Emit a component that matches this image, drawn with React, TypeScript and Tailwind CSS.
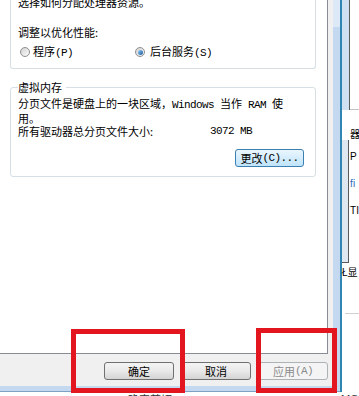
import React from "react";

const cjk = "font-['Noto_Sans_CJK_SC',sans-serif]";

// Latin parts render as narrow monospace, like SimSun does
function M({ children }: { children: React.ReactNode }) {
  return (
    <span className="font-['Liberation_Mono',monospace] tracking-[-0.6px]">
      {children}
    </span>
  );
}

function Radio({ checked = false }: { checked?: boolean }) {
  return (
    <span className="flex h-[10px] w-[10px] shrink-0 items-center justify-center rounded-full border border-[#8e8f8f] bg-linear-to-br from-[#d2d2d2] to-[#fbfbfb]">
      {checked && (
        <span className="h-[5px] w-[5px] rounded-full bg-linear-to-br from-[#8fcdf7] to-[#1a5a9e]" />
      )}
    </span>
  );
}

export default function App() {
  return (
    <div
      className={`relative flex h-[396px] w-[359px] flex-col overflow-hidden bg-white text-[11px] leading-[14px] text-black ${cjk}`}
    >
      <div className="flex h-[392px]">
        {/* performance options dialog */}
        <div className="flex w-[340px] flex-col">
          <div className="flex h-[386px]">
            <div className="flex w-[333px] flex-col bg-[#f0f0f0]">
              {/* tab page */}
              <div className="flex h-[354px] w-[328px] flex-col border-r border-b border-[#898c95] bg-white pl-[10px]">
                <div className="flex h-[69px] w-[306px] flex-col rounded-b-[3px] border-x border-b border-[#d5dfe5] pl-[7px]">
                  <div className="-mt-[5px]">选择如何分配处理器资源。</div>
                  <div className="mt-[16px]">调整以优化性能:</div>
                  <div className="mt-[5px] flex items-center">
                    <div className="flex w-[117px] items-center gap-[3px] pl-[2px]">
                      <Radio />
                      <span>
                        程序<M>(P)</M>
                      </span>
                    </div>
                    <div className="flex items-center gap-[5px]">
                      <Radio checked />
                      <span>
                        后台服务<M>(S)</M>
                      </span>
                    </div>
                  </div>
                </div>

                <div className="mt-[18px] flex w-[306px] flex-col rounded-[3px] border border-[#d5dfe5] pb-[9px] pl-[7px]">
                  <div className="-mt-[8px] w-fit bg-white pr-[4px]">虚拟内存</div>
                  <div className="mt-[3px] leading-[13px]">
                    分页文件是硬盘上的一块区域，<M>Windows </M>当作<M> RAM </M>使
                    <br />
                    用。
                  </div>
                  <div className="flex leading-[13px]">
                    <span className="w-[192px]">所有驱动器总分页文件大小:</span>
                    <M>3072 MB</M>
                  </div>
                  <div className="mt-[11px] flex justify-end pr-[11px]">
                    <button className="flex h-[18px] w-[69px] items-center justify-center rounded-[3px] border border-[#3c7fb1] bg-linear-to-b from-[#eaf6fd] to-[#bfe4fb] leading-none text-black">
                      更改<M>(C)...</M>
                    </button>
                  </div>
                </div>
              </div>

              {/* button bar */}
              <div className="flex flex-1 justify-end gap-[7px] pt-[8px] pr-[5px]">
                <button className="flex h-[18px] w-[70px] items-center justify-center rounded-[3px] border border-[#707070] bg-linear-to-b from-[#f4f4f4] via-[#e9e9e9] to-[#d4d4d4] leading-none text-black">
                  确定
                </button>
                <button className="flex h-[18px] w-[70px] items-center justify-center rounded-[3px] border border-[#707070] bg-linear-to-b from-[#f4f4f4] via-[#e9e9e9] to-[#d4d4d4] leading-none text-black">
                  取消
                </button>
                <button className="flex h-[18px] w-[70px] items-center justify-center rounded-[3px] border border-[#adb2b5] bg-[#f4f4f4] leading-none text-[#8a8a8a]">
                  应用<M>(A)</M>
                </button>
              </div>
            </div>
            {/* window frame, right edge */}
            <div className="flex w-[7px] flex-col bg-[#c4d9ef]">
              <div className="h-[27px] bg-[#dde9f6]" />
            </div>
          </div>
          <div className="h-[6px] border-b border-[#7da2c6] bg-[#c4d9ef]" />
        </div>

        <div className="w-[2px] bg-[#2f86b3]" />

        {/* window behind */}
        <div className="flex w-[17px] flex-col bg-white text-[10px]">
          <div className="flex h-[110px]">
            <div className="w-[8px] border-r border-[#5a5a5a] bg-[#cfe0f2]" />
            <div className="flex-1 border-b border-[#c4c4c4]" />
          </div>
          <div className="h-[30px] pt-[18px] pl-[8px] leading-[12px]">器</div>
          <div className="flex h-[123px]">
            <div className="w-[8px] border-r border-b border-[#5a5a5a] bg-[#dfe8f1]" />
            <div className="flex flex-col pl-[1px] font-['Liberation_Sans',sans-serif] leading-[12px]">
              <span className="mt-[11px]">P</span>
              <span className="mt-[15px] text-[#2a6ebb]">fi</span>
              <span className="mt-[15px]">TI</span>
            </div>
          </div>
          <div className="pt-[3px] leading-[12px]">Ł显</div>
          <div className="mt-[35px] ml-[3px] h-px bg-[#d0d0d0]" />
        </div>
      </div>

      {/* bottom fragments of the window behind */}
      <div className="relative h-[4px] overflow-hidden text-[11px] text-[#333]">
        <span className="absolute top-[1px] left-[128px] leading-[12px]">确定剪切</span>
        <span className="absolute top-[1px] left-[341px] font-['Liberation_Sans',sans-serif] leading-[12px]">
          MO
        </span>
      </div>

      {/* red annotation boxes */}
      <div className="absolute top-[329px] left-[71px] h-[64px] w-[114px] border-[5px] border-[#e3151f]" />
      <div className="absolute top-[328px] left-[256px] h-[65px] w-[81px] border-[5px] border-[#e3151f]" />
    </div>
  );
}
